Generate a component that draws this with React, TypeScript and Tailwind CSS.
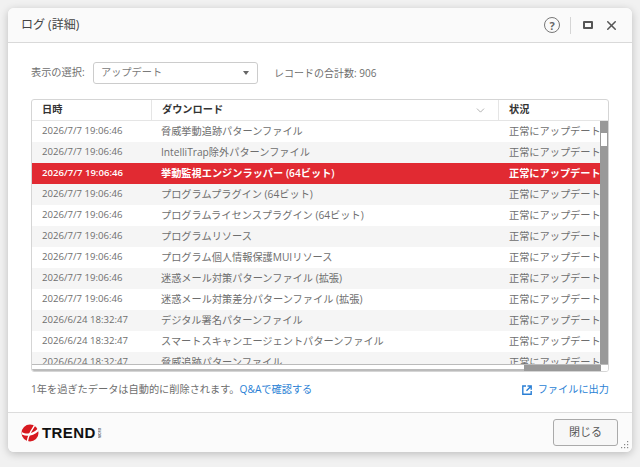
import { ChevronDown, X } from "lucide-react";

const rows = [
  ["2026/7/7 19:06:46", "脅威挙動追跡パターンファイル"],
  ["2026/7/7 19:06:46", "IntelliTrap除外パターンファイル"],
  ["2026/7/7 19:06:46", "挙動監視エンジンラッパー (64ビット)"],
  ["2026/7/7 19:06:46", "プログラムプラグイン (64ビット)"],
  ["2026/7/7 19:06:46", "プログラムライセンスプラグイン (64ビット)"],
  ["2026/7/7 19:06:46", "プログラムリソース"],
  ["2026/7/7 19:06:46", "プログラム個人情報保護MUIリソース"],
  ["2026/7/7 19:06:46", "迷惑メール対策パターンファイル (拡張)"],
  ["2026/7/7 19:06:46", "迷惑メール対策差分パターンファイル (拡張)"],
  ["2026/6/24 18:32:47", "デジタル署名パターンファイル"],
  ["2026/6/24 18:32:47", "スマートスキャンエージェントパターンファイル"],
  ["2026/6/24 18:32:47", "脅威追跡パターンファイル"],
];

function Logo() {
  return (
    <div className="flex items-center gap-[3px]">
      <svg width="18" height="18" viewBox="0 0 18 18">
        <circle cx="9" cy="9" r="8.5" fill="#d71920" />
        <path d="M0.8 8 C6 11 12 9.5 17 4.5 L17.6 7 C12 12 6 13 1 10.5 Z" fill="#fff" />
        <path d="M13.5 1.5 C10 7 7 11 6.5 17" stroke="#fff" strokeWidth="1.4" fill="none" />
      </svg>
      <span className="font-['Liberation_Sans',sans-serif] text-[15px] leading-none font-bold tracking-[0.4px] text-[#111]">TREND</span>
      <span className="font-['Liberation_Sans',sans-serif] text-[3px] leading-none [writing-mode:vertical-rl] rotate-180 text-[#555] font-bold">MICRO</span>
    </div>
  );
}

export default function App() {
  return (
    <div className="w-[640px] h-[467px] overflow-hidden bg-[#f1f1f1] pl-[8px] pr-[8px] pt-[8px] pb-[15px] font-['Open_Sans','Noto_Sans_CJK_JP',sans-serif] text-[10.2px] text-[#6e6e6e]">
      <div className="relative flex flex-col h-full rounded-[6px] bg-white shadow-[0_2px_8px_rgba(0,0,0,0.22)] overflow-hidden">
        {/* title bar */}
        <div className="flex items-center justify-between h-[35px] shrink-0 bg-[#fafafa] border-b border-[#d9d9d9] pl-[13px] pr-[13px]">
          <span className="text-[12px] text-[#444]">ログ (詳細)</span>
          <div className="flex items-center">
            <span className="flex items-center justify-center w-[16px] h-[16px] rounded-full border-[1.5px] border-[#777] text-[11px] font-bold leading-none text-[#666]">?</span>
            <span className="w-px h-[17px] bg-[#d5d5d5] ml-[10px] mr-[12px]" />
            <span className="w-[10px] h-[8px] border-[2px] border-[#555] rounded-[1px] mr-[11px]" />
            <X className="w-[15px] h-[15px] text-[#555]" strokeWidth={2.4} />
          </div>
        </div>

        <div className="flex-1 px-[23px] pt-[19px]">
          {/* filter */}
          <div className="flex items-center h-[22px]">
            <span className="w-[62px]">表示の選択:</span>
            <div className="flex items-center justify-between w-[165px] h-[22px] rounded-[3px] border border-[#ccc] pl-[7px] pr-[8px] text-[#7a7a7a]">
              <span>アップデート</span>
              <span className="w-0 h-0 border-x-[3.5px] border-x-transparent border-t-[4px] border-t-[#666]" />
            </div>
            <span className="ml-[16px] text-[10px]">レコードの合計数: 906</span>
          </div>

          {/* table */}
          <div className="mt-[15px] w-[578px] h-[273px] flex flex-col rounded-[3px] border border-[#d5d5d5] overflow-hidden">
            <div className="flex h-[21px] shrink-0 border-b border-[#e5e5e5] text-[#333] font-bold">
              <div className="w-[120px] pl-[10px] flex items-center border-r border-[#e5e5e5]">日時</div>
              <div className="w-[347px] pl-[10px] pr-[11px] flex items-center justify-between border-r border-[#e5e5e5]">
                <span>ダウンロード</span>
                <ChevronDown className="w-[13px] h-[13px] text-[#888]" strokeWidth={1.2} />
              </div>
              <div className="flex-1 pl-[10px] flex items-center">状況</div>
            </div>
            <div className="flex h-[243px] shrink-0">
              <div className="flex-1 overflow-hidden">
                {rows.map((r, i) => {
                  const selected = i === 2;
                  const rowCls = selected
                    ? "bg-[#e12a32] text-white font-semibold"
                    : i % 2 === 1
                      ? "bg-[#f5f5f5]"
                      : "bg-white";
                  return (
                    <div key={i} className={`flex h-[21px] items-center whitespace-nowrap ${rowCls}`}>
                      <div className="w-[120px] pl-[10px] shrink-0 text-[9.6px]">{r[0]}</div>
                      <div className="w-[347px] pl-[9px] shrink-0">{r[1]}</div>
                      <div className="pl-[10px] w-[102px]">正常にアップデート</div>
                    </div>
                  );
                })}
              </div>
              <div className="w-[8px] shrink-0 flex flex-col bg-[#999]">
                <div className="h-[12px]" />
                <div className="h-[13px] mx-[1px] bg-white" />
              </div>
            </div>
            <div className="flex flex-1 border-t border-[#bbb]">
              <div className="w-[492px] bg-white border-b-[2px] border-[#bbb]" />
              <div className="w-[77px] bg-[#999]" />
              <div className="flex-1 bg-white" />
            </div>
          </div>

          {/* note */}
          <div className="flex items-center justify-between w-[578px] mt-[10px] h-[16px]">
            <span>
              1年を過ぎたデータは自動的に削除されます。<span className="text-[#2a7fd5]">Q&amp;Aで確認する</span>
            </span>
            <span className="flex items-center gap-[6px] text-[#2a7fd5]">
              <svg width="10" height="10" viewBox="0 0 10 10" fill="none" stroke="#2a7fd5" strokeWidth="1.4">
                <path d="M4 1 H0.8 V9.2 H9.2 V6" />
                <path d="M5.5 1 H9.2 V4.7 M9 1.2 L4.5 5.7" />
              </svg>
              ファイルに出力
            </span>
          </div>
        </div>

        {/* footer */}
        <div className="flex items-center justify-between h-[40px] shrink-0 bg-[#fbfbfb] border-t border-[#dcdcdc] pl-[13px] pr-[14px]">
          <Logo />
          <button className="w-[65px] h-[27px] rounded-[3px] border border-[#aaa] bg-[#f7f7f7] text-[11px] text-[#555]">閉じる</button>
        </div>

        {/* resize grip */}
        <svg className="absolute right-[3px] bottom-[3px]" width="9" height="9" viewBox="0 0 9 9" fill="#888">
          <rect x="7" y="1" width="1.2" height="1.2" />
          <rect x="4" y="4" width="1.2" height="1.2" />
          <rect x="7" y="4" width="1.2" height="1.2" />
          <rect x="1" y="7" width="1.2" height="1.2" />
          <rect x="4" y="7" width="1.2" height="1.2" />
          <rect x="7" y="7" width="1.2" height="1.2" />
        </svg>
      </div>
    </div>
  );
}
